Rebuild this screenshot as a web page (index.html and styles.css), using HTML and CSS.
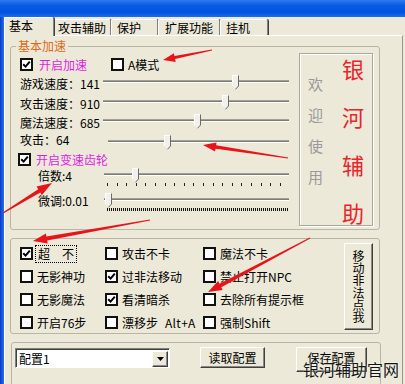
FILE: index.html
```html
<!DOCTYPE html>
<html>
<head>
<meta charset="utf-8">
<link rel="stylesheet" href="styles.css">
</head>
<body>
<div class="titlebar"></div>
<div class="window">
  <div class="frame-left"></div>
  <div class="client">
    <div class="tabs">
      <div class="tab sel w1">基本</div>
      <div class="tab w2">攻击辅助</div>
      <div class="tab w3">保护</div>
      <div class="tab w4">扩展功能</div>
      <div class="tab w5">挂机</div>
    </div>
    <div class="panel">
      <fieldset class="grp g1">
        <legend>基本加速</legend>
        <div class="g1-body">
          <div class="speed">
            <div class="cbrow r1">
              <span class="chk"><svg viewBox="0 0 9 9"><path d="M1.2 4.2 L3.6 6.6 L7.8 1.6" fill="none" stroke="#000" stroke-width="2"/></svg></span>
              <span class="mag lbl">开启加速</span>
              <span class="chk amode"></span>
              <span class="lbl">A模式</span>
            </div>
            <div class="srow h20">
              <span class="slabel">游戏速度：141</span>
              <div class="slider s186"><div class="track"></div><svg class="thumb" style="left:129px" viewBox="0 0 7 15"><path d="M0.5 0.5H6.5V11L3.5 14.3L0.5 11Z" fill="#f1f0ea"/><path d="M0.5 11V0.5H6" fill="none" stroke="#fff"/><path d="M6.5 0.5V11L3.5 14.3" fill="none" stroke="#6b6b66"/></svg></div>
            </div>
            <div class="srow h19">
              <span class="slabel">攻击速度：910</span>
              <div class="slider s186"><div class="track"></div><svg class="thumb" style="left:119px" viewBox="0 0 7 15"><path d="M0.5 0.5H6.5V11L3.5 14.3L0.5 11Z" fill="#f1f0ea"/><path d="M0.5 11V0.5H6" fill="none" stroke="#fff"/><path d="M6.5 0.5V11L3.5 14.3" fill="none" stroke="#6b6b66"/></svg></div>
            </div>
            <div class="srow h17">
              <span class="slabel">魔法速度：685</span>
              <div class="slider s186"><div class="track"></div><svg class="thumb" style="left:91px" viewBox="0 0 7 15"><path d="M0.5 0.5H6.5V11L3.5 14.3L0.5 11Z" fill="#f1f0ea"/><path d="M0.5 11V0.5H6" fill="none" stroke="#fff"/><path d="M6.5 0.5V11L3.5 14.3" fill="none" stroke="#6b6b66"/></svg></div>
            </div>
            <div class="srow h20 low">
              <span class="slabel wide">攻击：64</span>
              <div class="slider s181"><div class="track"></div><svg class="thumb" style="left:56px" viewBox="0 0 7 15"><path d="M0.5 0.5H6.5V11L3.5 14.3L0.5 11Z" fill="#f1f0ea"/><path d="M0.5 11V0.5H6" fill="none" stroke="#fff"/><path d="M6.5 0.5V11L3.5 14.3" fill="none" stroke="#6b6b66"/></svg></div>
            </div>
            <div class="cbrow r2">
              <span class="chk"><svg viewBox="0 0 9 9"><path d="M1.2 4.2 L3.6 6.6 L7.8 1.6" fill="none" stroke="#000" stroke-width="2"/></svg></span>
              <span class="mag lbl2">开启变速齿轮</span>
            </div>
            <div class="srow h25 gear">
              <span class="slabel short">倍数:4</span>
              <div class="slider s185"><div class="track"></div><div class="ticks"></div><svg class="thumb" style="left:28px" viewBox="0 0 7 15"><path d="M0.5 0.5H6.5V11L3.5 14.3L0.5 11Z" fill="#f1f0ea"/><path d="M0.5 11V0.5H6" fill="none" stroke="#fff"/><path d="M6.5 0.5V11L3.5 14.3" fill="none" stroke="#6b6b66"/></svg></div>
            </div>
            <div class="srow h25 gear">
              <span class="slabel short">微调:0.01</span>
              <div class="slider s185"><div class="track"></div><div class="ticks dense"></div><svg class="thumb" style="left:1px" viewBox="0 0 7 15"><path d="M0.5 0.5H6.5V11L3.5 14.3L0.5 11Z" fill="#f1f0ea"/><path d="M0.5 11V0.5H6" fill="none" stroke="#fff"/><path d="M6.5 0.5V11L3.5 14.3" fill="none" stroke="#6b6b66"/></svg></div>
            </div>
          </div>
          <div class="welcome">
            <div class="gray"><span>欢</span><span>迎</span><span>使</span><span>用</span></div>
            <div class="red"><span>银</span><span>河</span><span>辅</span><span>助</span></div>
          </div>
        </div>
      </fieldset>

      <div class="grp g2">
        <div class="opts">
          <div class="opt"><span class="chk"><svg viewBox="0 0 9 9"><path d="M1.2 4.2 L3.6 6.6 L7.8 1.6" fill="none" stroke="#000" stroke-width="2"/></svg></span><span class="focus">超　不</span></div>
          <div class="opt"><span class="chk"></span><span>攻击不卡</span></div>
          <div class="opt"><span class="chk"></span><span>魔法不卡</span></div>
          <div class="opt"><span class="chk"></span><span>无影神功</span></div>
          <div class="opt"><span class="chk"><svg viewBox="0 0 9 9"><path d="M1.2 4.2 L3.6 6.6 L7.8 1.6" fill="none" stroke="#000" stroke-width="2"/></svg></span><span>过非法移动</span></div>
          <div class="opt"><span class="chk"></span><span>禁止打开NPC</span></div>
          <div class="opt"><span class="chk"></span><span>无影魔法</span></div>
          <div class="opt"><span class="chk"><svg viewBox="0 0 9 9"><path d="M1.2 4.2 L3.6 6.6 L7.8 1.6" fill="none" stroke="#000" stroke-width="2"/></svg></span><span>看清暗杀</span></div>
          <div class="opt"><span class="chk"></span><span>去除所有提示框</span></div>
          <div class="opt"><span class="chk"></span><span>开启76步</span></div>
          <div class="opt"><span class="chk"></span><span>漂移步<span class="hot">Alt+A</span></span></div>
          <div class="opt"><span class="chk"></span><span>强制Shift</span></div>
        </div>
        <div class="btn vbtn"><span class="vtext">移动非法点我</span></div>
      </div>

      <div class="grp g3">
        <div class="combo">
          <span class="combo-text">配置1</span>
          <span class="combo-btn"><svg viewBox="0 0 7 4" width="7" height="4"><path d="M0 0H7L3.5 4Z" fill="#000"/></svg></span>
        </div>
        <div class="btn b-read">读取配置</div>
        <div class="btn b-save">保存配置</div>
      </div>
    </div>
  </div>
</div>

<svg class="arrows" viewBox="0 0 405 384" width="405" height="384">
  <polygon fill="#e8141c" points="211.9,49.5 174.5,56.1 173.9,53.2 163,60 175.7,62 175.1,59.1 212.1,50.5"/>
  <polygon fill="#e8141c" points="288.1,157.5 216.1,145.2 216.5,142.5 203,145 215.1,151.4 215.5,148.8 287.9,158.5"/>
  <polygon fill="#e8141c" points="3.3,213.4 40.3,192.6 41.8,195.2 52,183 36.6,186.6 38.2,189.2 2.7,212.6"/>
  <polygon fill="#e8141c" points="149.9,219.5 46.4,236.5 45.9,233.6 33,241 47.7,243.4 47.2,240.5 150.1,220.5"/>
  <polygon fill="#e8141c" points="309.8,237.6 219.5,283.7 218.1,281 208,292 222.7,289.9 221.3,287.2 310.2,238.4"/>
</svg>
<div class="watermark">银河辅助官网</div>
</body>
</html>
```

FILE: styles.css
```css
* { box-sizing: border-box; }
html, body { margin: 0; padding: 0; }
body {
  width: 405px;
  height: 384px;
  overflow: hidden;
  position: relative;
  background: #ece9d8;
  font-family: "Noto Sans CJK SC", "Noto Sans", sans-serif;
  font-size: 12px;
  line-height: 14px;
  color: #000;
}
.titlebar {
  height: 17px;
  background: linear-gradient(180deg, #2d7cf0 0%, #0b5ce4 30%, #0052de 70%, #1d6ce9 100%);
}
.window { display: flex; height: 367px; }
.frame-left {
  width: 4px;
  background: linear-gradient(90deg, #0a3cc4 0%, #1656dc 50%, #2f70e6 100%);
}
.client { flex: 1; display: flex; flex-direction: column; min-width: 0; }

/* tabs */
.tabs { display: flex; align-items: flex-end; height: 18px; }
.tab {
  height: 16px;
  line-height: 15px;
  border-top: 1px solid #fff;
  border-left: 1px solid #fff;
  border-right: 1px solid #808080;
  box-shadow: 1px 0 0 #404040;
  border-radius: 2px 2px 0 0;
  white-space: nowrap;
  background: #ece9d8;
}
.tab.sel {
  height: 19px;
  line-height: 16px;
  margin-bottom: -1px;
  position: relative;
  z-index: 1;
}
.w1 { width: 50px; padding-left: 4px; }
.w2 { width: 57px; padding-left: 3px; }
.w3 { width: 47px; padding-left: 5px; }
.w4 { width: 62px; padding-left: 6px; }
.w5 { width: 48px; padding-left: 5px; }

.panel {
  flex: 1;
  margin-right: 2px;
  border-top: 1px solid #fff;
  border-left: 1px solid #fff;
  border-right: 1px solid #9a9890;
  padding: 4px 0 0 5px;
}

/* group boxes */
.grp {
  border: 1px solid #b9b6a8;
  border-radius: 3px;
  margin: 0;
  padding: 0;
  min-width: 0;
}
.g1 { width: 370px; }
.g1 legend {
  color: #dc6a18;
  font-size: 12px;
  line-height: 12px;
  padding: 0 2px;
  margin-left: 5px;
}
.g1-body { display: flex; }
.speed { width: 288px; padding: 6px 0 0 9px; }

.cbrow { display: flex; align-items: center; height: 14px; }
.r1 { height: 16px; align-items: flex-start; }
.r2 { margin-top: 2px; margin-left: -2px; }
.lbl { margin-left: 6px; line-height: 13px; }
.lbl2 { margin-left: 5px; line-height: 13px; }
.amode { margin-left: 24px; }
.amode + .lbl { margin-left: 4px; }
.mag { color: #e01ee2; }

.chk {
  width: 13px;
  height: 13px;
  border: 2px solid #111;
  background: #fff;
  flex: none;
  display: inline-flex;
  align-items: center;
  justify-content: center;
}
.chk svg { width: 9px; height: 9px; display: block; }

.srow { display: flex; align-items: flex-start; }
.h20 { height: 20px; }
.h19 { height: 19px; }
.h17 { height: 17px; }
.h25 { height: 25px; }
.slabel { width: 83px; line-height: 20px; white-space: nowrap; flex: none; }
.slabel.wide { width: 88px; }
.slabel.short { width: 66px; margin-left: 18px; }
.slider { position: relative; height: 15px; margin-top: 1px; }
.low .slider { margin-top: 5px; }
.gear .slider { margin-top: 2px; height: 19px; }
.s186 { width: 186px; }
.s181 { width: 181px; }
.s185 { width: 185px; }
.track {
  margin-top: 5px;
  height: 3px;
  background: linear-gradient(180deg, #a19f96 0 1px, #7d7b74 1px 2px, #fff 2px 3px);
}
.thumb { position: absolute; top: 0; width: 7px; height: 15px; }
.ticks {
  margin-top: 7px;
  margin-left: 3px;
  width: 181px;
  height: 3px;
  background: repeating-linear-gradient(90deg, #222 0 1px, transparent 1px 9.6px);
}
.ticks.dense {
  background: repeating-linear-gradient(90deg, #111 0 1px, transparent 1px 2px);
}

.welcome {
  width: 74px;
  height: 173px;
  margin: 1px 0 3px 0;
  border: 1px solid #aca899;
  box-shadow: inset 1px 1px 0 #fff, 1px 1px 0 #fff;
  display: flex;
}
.gray {
  width: 42px;
  padding: 14px 0 0 8px;
  color: #9a9a9a;
  font-size: 15px;
  line-height: 31px;
}
.gray span, .red span { display: block; }
.red {
  margin-top: -10px;
  color: #e8242c;
  font-size: 22px;
  line-height: 48px;
}

/* options */
.g2 { margin-top: 8px; width: 370px; height: 96px; display: flex; }
.opts {
  flex: 1;
  display: grid;
  grid-template-columns: 85px 98px 1fr;
  grid-auto-rows: 23px;
  padding: 3px 0 0 9px;
}
.opt { display: flex; align-items: center; gap: 4px; white-space: nowrap; line-height: 14px; }
.focus { outline: 1px dotted #000; outline-offset: 1px; padding: 0 1px; }
.hot { margin-left: 7px; letter-spacing: 0.3px; }

.btn {
  background: #ece9d8;
  border: 1px solid;
  border-color: #fff #404040 #404040 #fff;
  box-shadow: inset -1px -1px 0 #8a887f;
  display: flex;
  align-items: center;
  justify-content: center;
  white-space: nowrap;
}
.vbtn { width: 29px; height: 87px; margin: 4px 6px 0 0; }
.vtext {
  width: 12px;
  font-size: 12px;
  line-height: 12.3px;
  white-space: normal;
  word-break: break-all;
  text-align: center;
}

/* config row */
.g3 {
  margin-top: 8px;
  margin-left: 1px;
  width: 370px;
  height: 60px;
  display: flex;
  align-items: flex-start;
  padding-left: 3px;
}
.combo {
  margin-top: 5px;
  width: 155px;
  height: 20px;
  background: #fff;
  border: 1px solid;
  border-color: #808080 #fff #fff #808080;
  box-shadow: inset 1px 1px 0 #404040;
  display: flex;
  align-items: center;
  padding: 1px 1px 0 3px;
}
.combo-text { flex: 1; line-height: 16px; }
.combo-btn {
  width: 16px;
  height: 16px;
  background: #ece9d8;
  border: 1px solid;
  border-color: #fff #404040 #404040 #fff;
  box-shadow: inset -1px -1px 0 #8a887f;
  display: flex;
  align-items: center;
  justify-content: center;
}
.combo-btn svg { display: block; }
.b-read { margin: 4px 0 0 30px; width: 65px; height: 21px; }
.b-save { margin: 4px 0 0 31px; width: 71px; height: 25px; align-items: flex-start; padding-top: 3px; }

.arrows { position: absolute; left: 0; top: 0; pointer-events: none; }
.watermark {
  position: absolute;
  left: 303px;
  top: 359px;
  font-size: 16px;
  line-height: 20px;
  color: #151515;
  text-shadow: 0 0 2px #fff;
}
```
